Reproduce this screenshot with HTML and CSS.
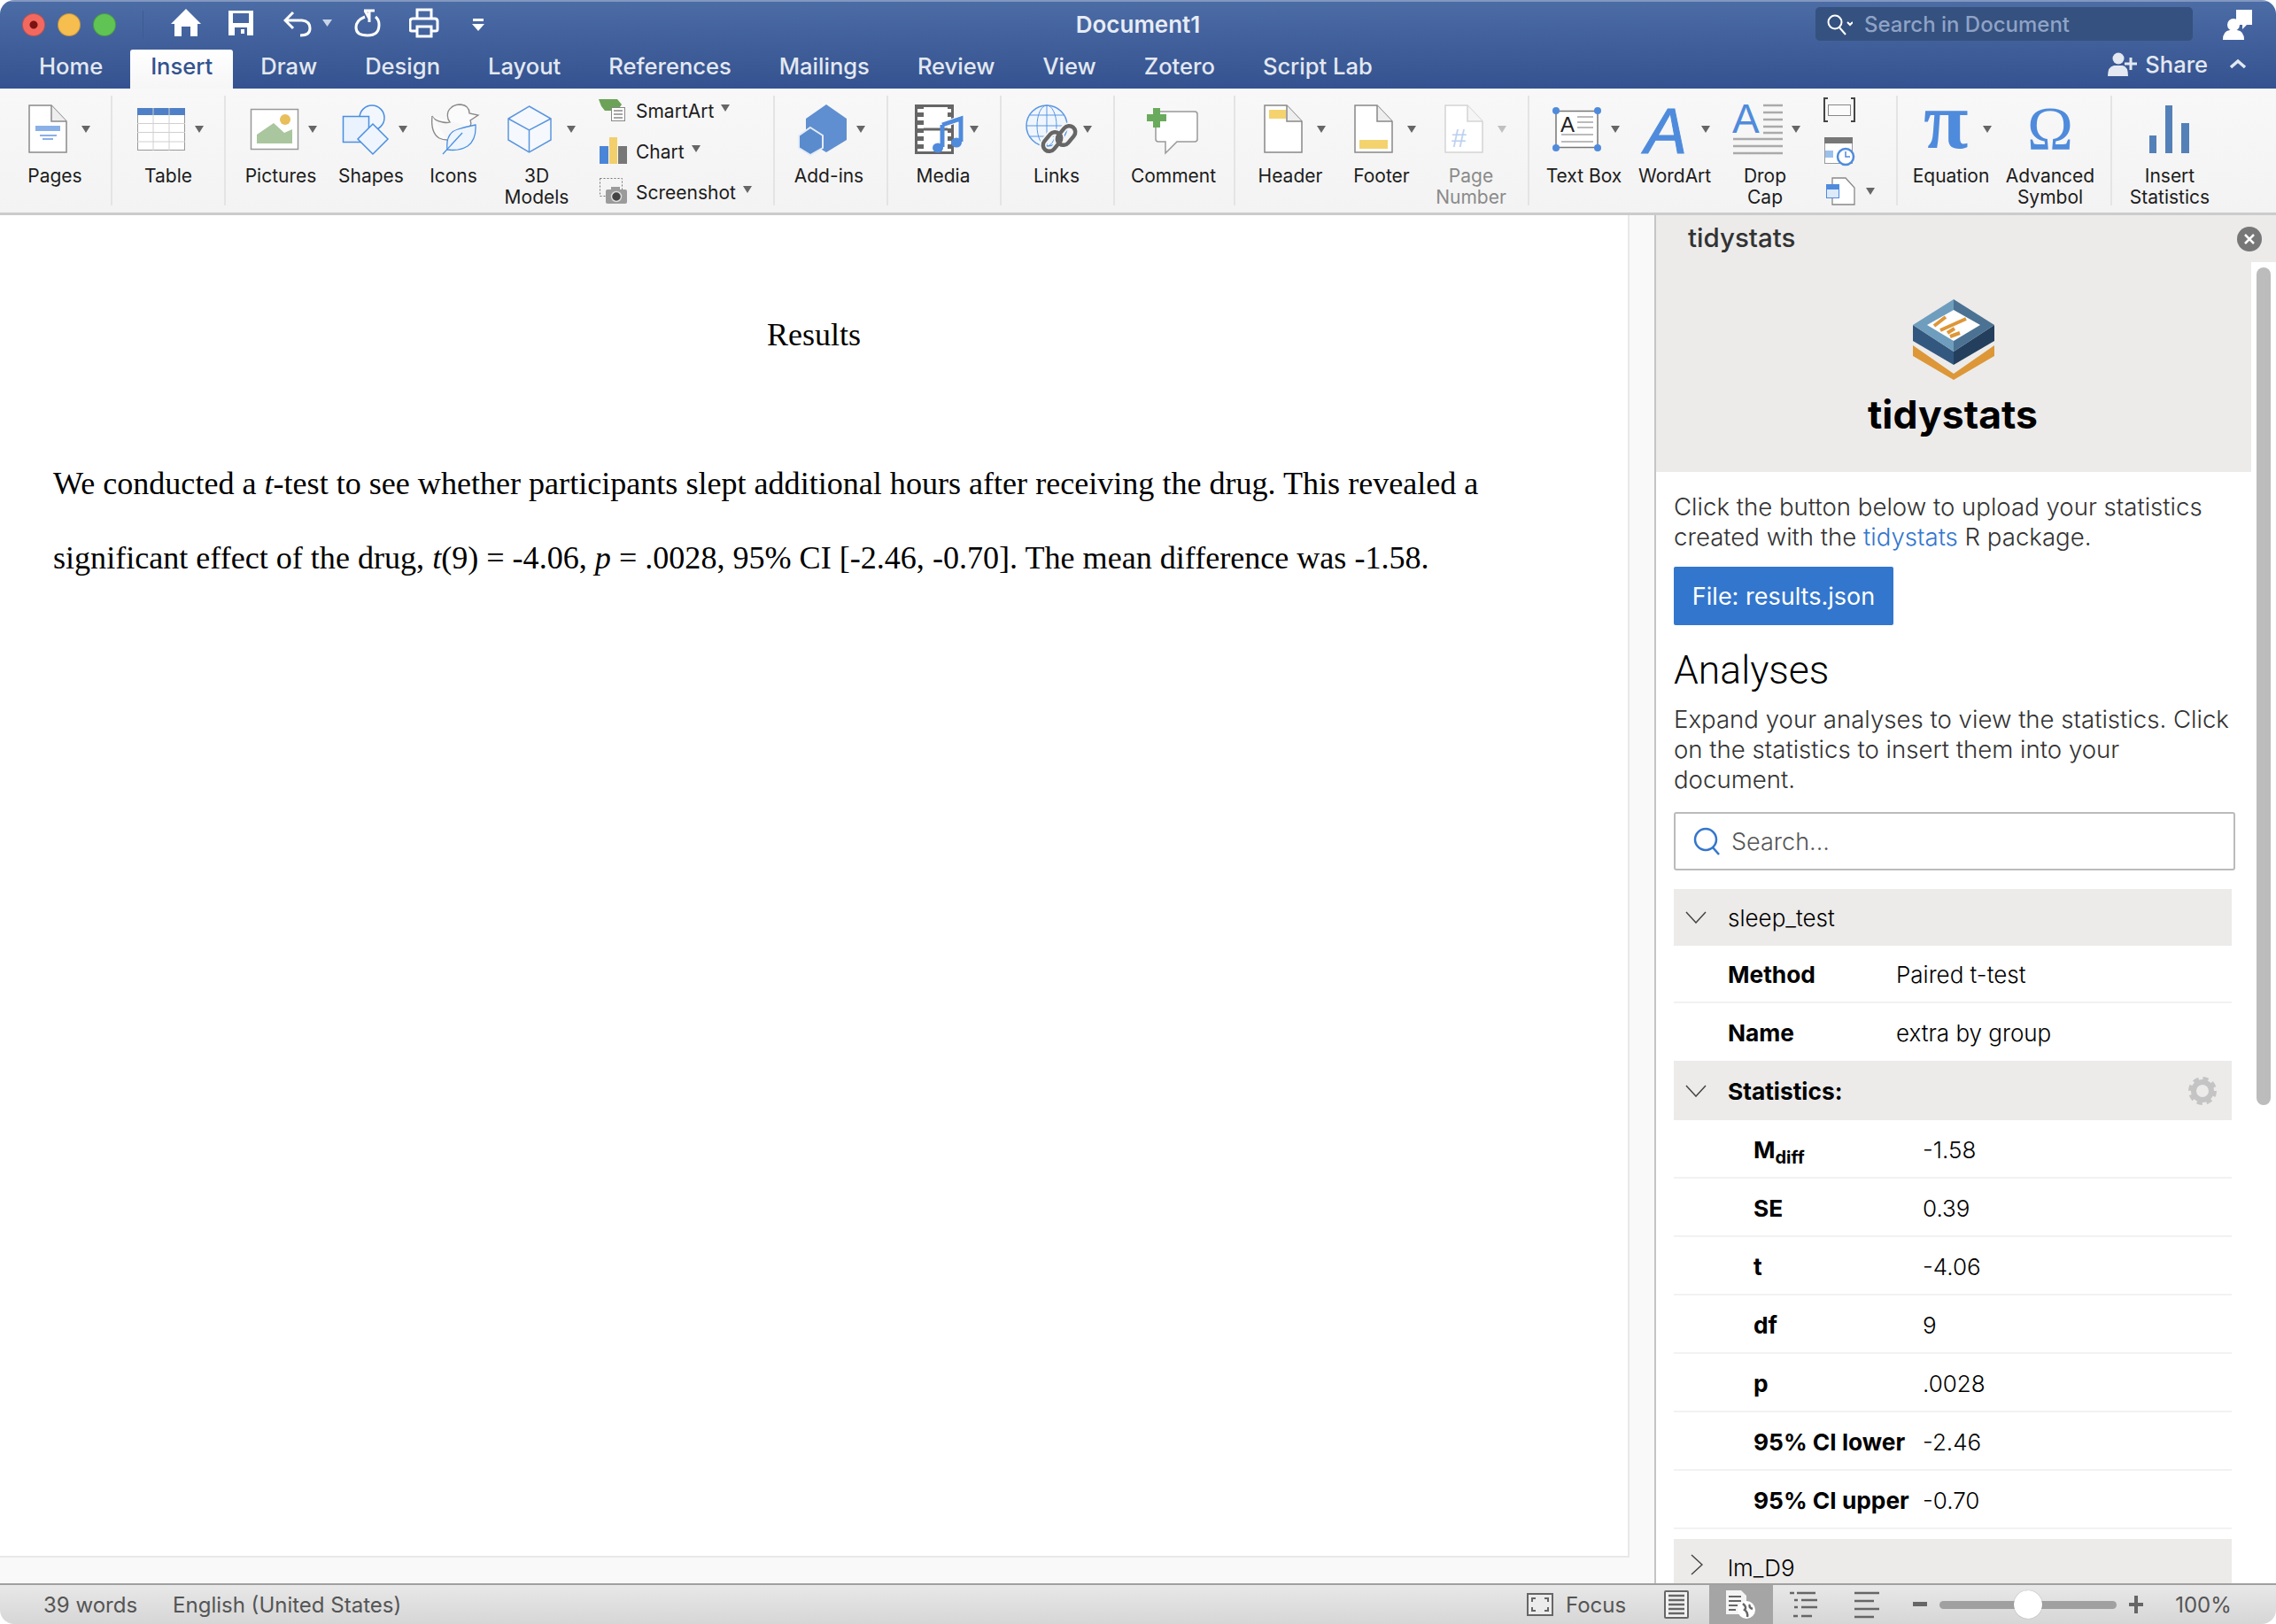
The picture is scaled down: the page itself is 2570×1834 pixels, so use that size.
FILE: index.html
```html
<!DOCTYPE html>
<html lang="en">
<head>
    <meta charset="UTF-8">
    <title>Document1</title>
    <link rel="stylesheet" href="styles.css">
</head>
<body>
<div class="window">

    <!-- Title bar and tabs -->
    <header class="titlebar">
        <div class="title-row">
            <div class="quick">
                <span class="light light-red"></span>
                <span class="light light-yellow"></span>
                <span class="light light-green"></span>
                <span class="quick-sep"></span>
                <svg width="65" height="56" viewBox="193 0 65 56"><path d="M210 10 L227 27 L223 27 L223 41 L215 41 L215 30 L205 30 L205 41 L197 41 L197 27 L193 27 Z" fill="#fff"/></svg>
                <svg width="62" height="56" viewBox="258 0 62 56"><path d="M258 12 H286 V40 H258 Z M263 15 V26 H281 V15 Z M265 31 V40 H279 V31 Z M272 33 H276 V38 H272 Z" fill="#fff" fill-rule="evenodd"/></svg>
                <svg width="80" height="56" viewBox="320 0 80 56"><path d="M331 14 L322 23 L331 32 M323 23 H341 Q350 24 350 32 Q350 40 339 40" fill="none" stroke="#fff" stroke-width="3"/><path d="M364 22 H375 L369.500 30 Z" fill="#c9d4e6"/></svg>
                <svg width="62" height="56" viewBox="400 0 62 56"><path d="M412 19 Q402 23 402 31 Q402 40 415 40 Q428 40 428 28 Q428 22 424 19 M412 12 L417 21 M417 12 V25 M411 12 H423" fill="none" stroke="#fff" stroke-width="3"/></svg>
                <svg width="70" height="56" viewBox="462 0 70 56"><path d="M471 21 V11 H487 V21 M471 35 H465 Q463 35 463 33 V24 Q463 21 466 21 H491 Q494 21 494 24 V33 Q494 35 492 35 H487 M471 30 H487 V41 H471 Z" fill="none" stroke="#fff" stroke-width="3"/></svg>
                <svg width="16" height="56" viewBox="532 0 16 56"><path d="M534 21 H546 V24 H534 Z M533 27 H547 L540 35 Z" fill="#fff"/></svg>
            </div>
            <div class="doc-title">Document1</div>
            <div class="title-right">
                <div class="doc-search">
                    <svg width="34" height="38" viewBox="0 0 34 38"><circle cx="14" cy="17" r="7.500" fill="none" stroke="#fff" stroke-width="2"/><path d="M19 23 L26 31 M28 17 L31 20 L34 17" fill="none" stroke="#fff" stroke-width="2"/></svg>
                    <span>Search in Document</span>
                </div>
                <svg class="person" width="36" height="38" viewBox="0 0 36 38"><path d="M16 3 H34 V20 H28 L23 25 V20 H16 Z" fill="#fff"/><circle cx="13" cy="20" r="7" fill="#fff"/><path d="M1 37 Q1 27 9 26 H17 Q25 27 25 37 Z" fill="#fff"/></svg>
            </div>
        </div>
        <div class="tab-row">
            <nav class="tabs">
                <span class="tab">Home</span>
                <span class="tab tab-active">Insert</span>
                <span class="tab">Draw</span>
                <span class="tab">Design</span>
                <span class="tab">Layout</span>
                <span class="tab">References</span>
                <span class="tab">Mailings</span>
                <span class="tab">Review</span>
                <span class="tab">View</span>
                <span class="tab">Zotero</span>
                <span class="tab">Script Lab</span>
            </nav>
            <div class="share">
                <svg width="36" height="30" viewBox="0 0 36 30"><circle cx="13" cy="9" r="6.500" fill="#e3e8f1"/><path d="M1 29 Q1 18 8 17 H18 Q24 18 24 29 Z" fill="#e3e8f1"/><path d="M27 8 V22 M20 15 H34" stroke="#e3e8f1" stroke-width="3"/></svg>
                <span>Share</span>
                <svg class="share-chev" width="20" height="12" viewBox="0 0 20 12"><path d="M2 10 L10 3 L18 10" fill="none" stroke="#e3e8f1" stroke-width="3.500"/></svg>
            </div>
        </div>
    </header>

    <!-- Ribbon -->
    <section class="ribbon">
        <div class="group g-pages">
            <div class="tool w-124">
                <svg width="124" height="78" viewBox="0 108 124 78">
                    <path d="M33 119 H58 L75 137 V172 H33 Z" fill="#fff" stroke="#8a8a8a" stroke-width="1.500"/><path d="M58 119 V137 H75" fill="#eee" stroke="#8a8a8a" stroke-width="1.500"/>
                    <path d="M40 142 H68 V148 H40 Z M45 152 H64 V154 H45 Z M48 156 H60 V158 H48 Z" fill="#8ab0e8"/>
                    <path d="M92 142 H102 L97 150 Z" fill="#666"/>
                </svg>
                <div class="label">Pages</div>
            </div>
        </div>
        <div class="group g-table">
            <div class="tool w-126">
                <svg width="126" height="78" viewBox="127 108 126 78">
                    <rect x="155.500" y="122.500" width="53" height="47" fill="#fff" stroke="#999"/>
                    <rect x="155" y="122" width="54" height="8" fill="#4f7fc6"/>
                    <path d="M173 122 V170 M191 122 V170 M155 139.500 H209 M155 149.500 H209 M155 160 H209" stroke="#d0d0d0" stroke-width="1" fill="none"/>
                    <path d="M220 142 H230 L225 150 Z" fill="#666"/>
                </svg>
                <div class="label">Table</div>
            </div>
        </div>
        <div class="group g-illus">
            <div class="tool w-124">
                <svg width="124" height="78" viewBox="255 108 124 78">
                    <rect x="283.500" y="123.500" width="53" height="45" fill="#fff" stroke="#999" stroke-width="1.500"/>
                    <path d="M290 162 V152 L309 139 L321 150 L330 146 V162 Z" fill="#aac69e"/>
                    <ellipse cx="322" cy="135" rx="6" ry="6" fill="#e8bf5a"/>
                    <path d="M348 142 H358 L353 150 Z" fill="#666"/>
                </svg>
                <div class="label">Pictures</div>
            </div>
            <div class="tool w-80">
                <svg width="80" height="78" viewBox="379 108 80 78">
                    <circle cx="420" cy="133" r="14" fill="#f2f7fe" stroke="#4a8fe0" stroke-width="1.500"/>
                    <rect x="387.500" y="131.500" width="29" height="29" fill="#e9f2fd" stroke="#4a8fe0" stroke-width="1.500"/>
                    <path d="M421 140 L438 157 L421 174 L404 157 Z" fill="#eff5fe" stroke="#4a8fe0" stroke-width="1.500"/>
                    <path d="M450 142 H460 L455 150 Z" fill="#666"/>
                </svg>
                <div class="label">Shapes</div>
            </div>
            <div class="tool w-106">
                <svg width="106" height="78" viewBox="459 108 106 78">
                    <path d="M488 131 Q490 136 500 138 Q505 139 508 138 Q504 133 506 126 Q510 118 520 118 Q530 119 530 128 L540 130 L531 136 Q533 141 530 143" fill="#fbfbfb" stroke="#888" stroke-width="1.300"/>
                    <path d="M488 131 Q486 150 496 156 Q500 158 505 158" fill="#fbfbfb" stroke="#888" stroke-width="1.300"/>
                    <path d="M505 169 Q503 150 517 146 Q527 143 537 141 Q538 158 528 165 Q518 171 505 169 Z" fill="#eef5fd" stroke="#4a8fe0" stroke-width="1.300"/>
                    <path d="M500 174 L522 150" fill="none" stroke="#4a8fe0" stroke-width="1.300"/>
                </svg>
                <div class="label">Icons</div>
            </div>
            <div class="tool w-82">
                <svg width="82" height="78" viewBox="565 108 82 78">
                    <path d="M597.500 120 L622 134 V158 L597.500 172 L574 158 V134 Z" fill="#f5f9fe" stroke="#5c96dd" stroke-width="1.500"/>
                    <path d="M574 134 L597.500 147 L622 134 M597.500 147 V172" fill="none" stroke="#5c96dd" stroke-width="1.500"/>
                    <path d="M640 142 H650 L645 150 Z" fill="#666"/>
                </svg>
                <div class="label">3D<br>Models</div>
            </div>
            <div class="mini-list">
                <div class="mini-row">
                    <svg width="32" height="30" viewBox="676 109 32 30">
                        <path d="M676 112 H697 L702 118 L697 125 H683 L679 120 Z" fill="#6ba257"/>
                        <rect x="690.500" y="121.500" width="15" height="15" fill="#fff" stroke="#888"/>
                        <path d="M693 125 H703 M693 129 H703 M693 133 H703" stroke="#888" stroke-width="1.500"/>
                    </svg>
                    <span>SmartArt</span><i class="caret"></i>
                </div>
                <div class="mini-row">
                    <svg width="32" height="30" viewBox="676 155 32 30">
                        <rect x="677" y="165" width="10" height="20" fill="#4a85d8"/>
                        <rect x="688" y="155" width="9" height="30" fill="#f2cf6a"/>
                        <rect x="698" y="165" width="10" height="20" fill="#777"/>
                    </svg>
                    <span>Chart</span><i class="caret"></i>
                </div>
                <div class="mini-row">
                    <svg width="32" height="30" viewBox="676 203 32 30">
                        <rect x="677.500" y="203.500" width="25" height="20" fill="none" stroke="#777" stroke-dasharray="2 2"/>
                        <rect x="684" y="216" width="24" height="16" rx="2" fill="#9b9b9b"/><rect x="690" y="213" width="10" height="4" fill="#9b9b9b"/>
                        <circle cx="696" cy="224" r="5.500" fill="#444" stroke="#ddd" stroke-width="1.500"/>
                    </svg>
                    <span>Screenshot</span><i class="caret"></i>
                </div>
            </div>
        </div>
        <div class="group g-addins">
            <div class="tool w-122">
                <svg width="122" height="78" viewBox="875 108 122 78">
                    <path d="M933 118 L956 134 V158 L933 172 L910 158 V134 Z" fill="#5f8fd0"/>
                    <path d="M915 144 L929 153 V167 L915 175 L902 167 V153 Z" fill="#5a8bcd" stroke="#e4ecf7" stroke-width="2"/>
                    <path d="M967 142 H977 L972 150 Z" fill="#666"/>
                </svg>
                <div class="label">Add-ins</div>
            </div>
        </div>
        <div class="group g-media">
            <div class="tool w-124">
                <svg width="124" height="78" viewBox="1003 108 124 78">
                    <rect x="1034.500" y="119.500" width="41" height="53" fill="#fff" stroke="#666" stroke-width="3"/>
                    <path d="M1039 118 V174" stroke="#666" stroke-width="8" stroke-dasharray="5 4"/>
                    <path d="M1073 118 V174" stroke="#666" stroke-width="6" stroke-dasharray="5 4"/>
                    <path d="M1043 146 H1070" stroke="#666" stroke-width="3"/>
                    <path d="M1064 141 L1085 134 V160" fill="none" stroke="#fff" stroke-width="7"/>
                    <path d="M1064 141 L1085 134 V160" fill="none" stroke="#4f8bdc" stroke-width="5"/><path d="M1064 141 V166" stroke="#4f8bdc" stroke-width="5"/>
                    <ellipse cx="1059" cy="167" rx="6" ry="5.500" fill="#4f8bdc"/><ellipse cx="1080" cy="161" rx="6" ry="5.500" fill="#4f8bdc"/>
                    <path d="M1095 142 H1105 L1100 150 Z" fill="#666"/>
                </svg>
                <div class="label">Media</div>
            </div>
        </div>
        <div class="group g-links">
            <div class="tool w-124">
                <svg width="124" height="78" viewBox="1131 108 124 78">
                    <circle cx="1182" cy="142" r="23" fill="#f0f6fe" stroke="#5b97e2" stroke-width="1.500"/>
                    <ellipse cx="1182" cy="142" rx="11" ry="23" fill="none" stroke="#5b97e2"/>
                    <path d="M1182 119 V165 M1159 142 H1205 M1163 130 H1201 M1163 154 H1201" fill="none" stroke="#5b97e2"/>
                    <rect x="1176" y="153" width="24" height="14" rx="7" transform="rotate(-50 1188 160)" fill="none" stroke="#f5f5f5" stroke-width="8"/>
                    <rect x="1192" y="146" width="24" height="14" rx="7" transform="rotate(-50 1204 153)" fill="none" stroke="#f5f5f5" stroke-width="8"/>
                    <rect x="1176" y="153" width="24" height="14" rx="7" transform="rotate(-50 1188 160)" fill="none" stroke="#666" stroke-width="4.500"/>
                    <rect x="1192" y="146" width="24" height="14" rx="7" transform="rotate(-50 1204 153)" fill="none" stroke="#666" stroke-width="4.500"/>
                    <path d="M1223 142 H1233 L1228 150 Z" fill="#666"/>
                </svg>
                <div class="label">Links</div>
            </div>
        </div>
        <div class="group g-comment">
            <div class="tool w-132">
                <svg width="132" height="78" viewBox="1259 108 132 78">
                    <path d="M1305 126 H1349 Q1352 126 1352 129 V157 Q1352 160 1349 160 H1329 L1316 173 V160 H1308 Q1305 160 1305 157 Z" fill="#fff" stroke="#999" stroke-width="1.500"/>
                    <path d="M1302 122 H1310 V129 H1317 V137 H1310 V144 H1302 V137 H1295 V129 H1302 Z" fill="#6aaa5c"/>
                </svg>
                <div class="label">Comment</div>
            </div>
        </div>
        <div class="group g-header">
            <div class="tool w-124">
                <svg width="124" height="78" viewBox="1395 108 124 78">
                    <path d="M1428 119 H1453 L1470 137 V172 H1428 Z" fill="#fff" stroke="#888" stroke-width="1.500"/><path d="M1453 119 V137 H1470" fill="#eee" stroke="#888" stroke-width="1.500"/>
                    <rect x="1433" y="124" width="19" height="10" fill="#f4d36e"/>
                    <path d="M1487 142 H1497 L1492 150 Z" fill="#666"/>
                </svg>
                <div class="label">Header</div>
            </div>
            <div class="tool w-82">
                <svg width="82" height="78" viewBox="1519 108 82 78">
                    <path d="M1530 119 H1555 L1572 137 V172 H1530 Z" fill="#fff" stroke="#888" stroke-width="1.500"/><path d="M1555 119 V137 H1572" fill="#eee" stroke="#888" stroke-width="1.500"/>
                    <rect x="1535" y="158" width="32" height="10" fill="#f4d36e"/>
                    <path d="M1589 142 H1599 L1594 150 Z" fill="#666"/>
                </svg>
                <div class="label">Footer</div>
            </div>
            <div class="tool w-120">
                <svg width="120" height="78" viewBox="1601 108 120 78">
                    <path d="M1632 119 H1657 L1674 137 V172 H1632 Z" fill="#fff" stroke="#d4d4d4" stroke-width="1.500"/><path d="M1657 119 V137 H1674" fill="#f5f5f5" stroke="#d4d4d4" stroke-width="1.500"/>
                    <text x="1639" y="166" class="svg-hash">#</text>
                    <path d="M1691 142 H1701 L1696 150 Z" fill="#c0c0c0"/>
                </svg>
                <div class="label label-off">Page<br>Number</div>
            </div>
        </div>
        <div class="group g-text">
            <div class="tool w-123">
                <svg width="123" height="78" viewBox="1727 108 123 78">
                    <rect x="1757" y="125.500" width="47" height="41" fill="#fff" stroke="#777" stroke-width="1.500"/>
                    <circle cx="1757" cy="125" r="4" fill="#4f8bdc"/><circle cx="1804" cy="125" r="4" fill="#4f8bdc"/><circle cx="1757" cy="167" r="4" fill="#4f8bdc"/><circle cx="1804" cy="167" r="4" fill="#4f8bdc"/>
                    <text x="1762" y="149" class="svg-a">A</text>
                    <path d="M1781 132 H1799 M1781 138 H1799 M1781 144 H1799 M1763 152 H1799 M1763 160 H1799" stroke="#bbb" stroke-width="2"/>
                    <path d="M1819 142 H1829 L1824 150 Z" fill="#666"/>
                </svg>
                <div class="label">Text Box</div>
            </div>
            <div class="tool w-82">
                <svg width="82" height="78" viewBox="1850 108 82 78">
                    <text x="1857" y="173" class="svg-wordart">A</text>
                    <path d="M1921 142 H1931 L1926 150 Z" fill="#666"/>
                </svg>
                <div class="label">WordArt</div>
            </div>
            <div class="tool w-122">
                <svg width="122" height="78" viewBox="1932 108 122 78">
                    <text x="1956" y="150" class="svg-drop">A</text>
                    <path d="M1991 119 H2013 M1991 127 H2013 M1991 135 H2013 M1991 143 H2013 M1991 150 H2013 M1957 157 H2013 M1957 165 H2013 M1957 173 H2013" stroke="#aaa" stroke-width="2.500"/>
                    <path d="M2023 142 H2033 L2028 150 Z" fill="#666"/>
                </svg>
                <div class="label">Drop<br>Cap</div>
            </div>
            <div class="mini-col">
                <svg width="60" height="30" viewBox="2054 109 60 30">
                    <path d="M2064 111 H2060 V137 H2064 M2090 111 H2094 V137 H2090" fill="none" stroke="#444" stroke-width="2"/>
                    <rect x="2064.500" y="118.500" width="25" height="12" fill="#fbfbfb" stroke="#888"/>
                </svg>
                <svg width="60" height="34" viewBox="2054 155 60 34">
                    <rect x="2060.500" y="155.500" width="31" height="29" fill="#fff" stroke="#999"/>
                    <rect x="2060" y="155" width="32" height="7" fill="#777"/>
                    <rect x="2061" y="170" width="9" height="8" fill="#9cc0ec"/>
                    <circle cx="2084" cy="177" r="9" fill="#fff" stroke="#4f8bdc" stroke-width="2.500"/>
                    <path d="M2084 171 V177 H2089" fill="none" stroke="#4f8bdc" stroke-width="1.500"/>
                </svg>
                <svg width="64" height="32" viewBox="2054 201 64 32">
                    <path d="M2069 201 H2084 L2094 212 V231 H2069 Z" fill="#fff" stroke="#888" stroke-width="1.300"/>
                    <rect x="2062" y="208" width="15" height="5" fill="#4f8bdc"/>
                    <rect x="2062.500" y="213.500" width="14" height="10" fill="#ddeafa" stroke="#4f8bdc"/>
                    <path d="M2107 212 H2117 L2112 220 Z" fill="#666"/>
                </svg>
            </div>
        </div>
        <div class="group g-symbols">
            <div class="tool w-120">
                <svg width="120" height="78" viewBox="2143 108 120 78">
                    <text x="2172" y="167" class="svg-math">π</text>
                    <path d="M2239 142 H2249 L2244 150 Z" fill="#666"/>
                </svg>
                <div class="label">Equation</div>
            </div>
            <div class="tool w-104">
                <svg width="104" height="78" viewBox="2263 108 104 78">
                    <text x="2289" y="169" class="svg-omega">Ω</text>
                </svg>
                <div class="label">Advanced<br>Symbol</div>
            </div>
        </div>
        <div class="group g-stats">
            <div class="tool w-130">
                <svg width="130" height="78" viewBox="2385 108 130 78">
                    <path d="M2427 153 H2435 V173 H2427 Z M2445 119 H2453 V173 H2445 Z M2463 139 H2472 V173 H2463 Z" fill="#5480b8"/>
                </svg>
                <div class="label">Insert<br>Statistics</div>
            </div>
        </div>
    </section>

    <!-- Document and task pane -->
    <main class="workspace">
        <div class="doc-area">
            <article class="page">
                <h1 class="doc-heading">Results</h1>
                <p class="doc-text">We conducted a <em>t</em>-test to see whether participants slept additional hours after receiving the drug. This revealed a<br>significant effect of the drug, <em>t</em>(9) = -4.06, <em>p</em> = .0028, 95% CI [-2.46, -0.70]. The mean difference was -1.58.</p>
            </article>
        </div>

        <aside class="pane">
            <div class="pane-head">
                <span>tidystats</span>
                <svg width="28" height="28" viewBox="0 0 28 28"><circle cx="14" cy="14" r="14" fill="#777"/><path d="M9 9 L19 19 M19 9 L9 19" stroke="#fff" stroke-width="2.500"/></svg>
            </div>
            <div class="pane-main">
                <div class="pane-scroll">
                    <div class="banner">
                        <svg width="92" height="92" viewBox="2159 338 92 92">
                            <path d="M2159 390 L2205 422 L2251 390 V402 L2205 429 L2159 402 Z" fill="#dd9738"/>
                            <path d="M2159 367 L2205 397 V412 L2159 385 Z" fill="#33587f"/>
                            <path d="M2251 367 L2205 397 V412 L2251 385 Z" fill="#243f5e"/>
                            <path d="M2205 338 L2159 367 L2205 397 Z" fill="#6f9dbd"/>
                            <path d="M2205 338 L2251 367 L2205 397 Z" fill="#4b7292"/>
                            <path d="M2205 350 L2235 367 L2205 385 L2175 367 Z" fill="#fff"/>
                            <path d="M2183 368 L2196 358 M2190 373 L2219 360 M2198 376 L2206 371 M2201 380 L2212 376" stroke="#dd9738" stroke-width="4" fill="none"/>
                        </svg>
                        <div class="banner-name">tidystats</div>
                    </div>
                    <div class="pane-content">
                        <p class="intro">Click the button below to upload your statistics<br>created with the <a class="link">tidystats</a> R package.</p>
                        <button class="file-btn">File: results.json</button>
                        <h2 class="analyses">Analyses</h2>
                        <p class="intro">Expand your analyses to view the statistics. Click<br>on the statistics to insert them into your<br>document.</p>
                        <div class="search">
                            <svg width="32" height="34" viewBox="0 0 32 34"><circle cx="14" cy="15" r="12" fill="none" stroke="#3376cd" stroke-width="2.500"/><path d="M22 24 L29 32" stroke="#3376cd" stroke-width="2.500"/></svg>
                            <span>Search...</span>
                        </div>
                        <div class="acc-row">
                            <svg class="chev" width="24" height="14" viewBox="0 0 24 14"><path d="M1 1 L12 13 L23 1" fill="none" stroke="#444" stroke-width="1.500"/></svg>
                            <span>sleep_test</span>
                        </div>
                        <div class="info-row"><b>Method</b><span>Paired t-test</span></div>
                        <div class="info-row info-last"><b>Name</b><span>extra by group</span></div>
                        <div class="acc-row acc-stats">
                            <svg class="chev" width="24" height="14" viewBox="0 0 24 14"><path d="M1 1 L12 13 L23 1" fill="none" stroke="#444" stroke-width="1.500"/></svg>
                            <b>Statistics:</b>
                            <svg class="gear" width="32" height="32" viewBox="0 0 32 32"><circle cx="16" cy="16" r="10" fill="none" stroke="#c4c4c4" stroke-width="6"/><circle cx="16" cy="16" r="13.500" fill="none" stroke="#c4c4c4" stroke-width="5" stroke-dasharray="6 4.600"/></svg>
                        </div>
                        <div class="stat-row"><b>M<sub>diff</sub></b><span>-1.58</span></div>
                        <div class="stat-row"><b>SE</b><span>0.39</span></div>
                        <div class="stat-row"><b>t</b><span>-4.06</span></div>
                        <div class="stat-row"><b>df</b><span>9</span></div>
                        <div class="stat-row"><b>p</b><span>.0028</span></div>
                        <div class="stat-row"><b>95% CI lower</b><span>-2.46</span></div>
                        <div class="stat-row"><b>95% CI upper</b><span>-0.70</span></div>
                        <div class="acc-row acc-last">
                            <svg class="chev" width="14" height="24" viewBox="0 0 14 24"><path d="M1 1 L13 12 L1 23" fill="none" stroke="#444" stroke-width="1.500"/></svg>
                            <span class="chev-text">lm_D9</span>
                        </div>
                    </div>
                </div>
                <div class="scrollbar"><div class="thumb"></div></div>
            </div>
        </aside>
    </main>

    <!-- Status bar -->
    <footer class="statusbar">
        <span class="status-words">39 words</span>
        <span class="status-lang">English (United States)</span>
        <div class="status-right">
            <svg width="30" height="26" viewBox="0 0 30 26"><rect x="1" y="1" width="28" height="24" fill="#ececec" stroke="#666" stroke-width="2"/><path d="M6 10 V6 H10 M20 6 H24 V10 M6 16 V20 H10 M20 20 H24 V16" fill="none" stroke="#666" stroke-width="2"/></svg>
            <span class="status-focus">Focus</span>
            <svg class="view-print" width="28" height="32" viewBox="0 0 28 32"><rect x="1" y="1" width="26" height="30" rx="1" fill="#f2f2f2" stroke="#666" stroke-width="2"/><path d="M5 6 H23 M5 11 H23 M5 16 H23 M5 21 H23 M5 26 H23" stroke="#666" stroke-width="2.500"/></svg>
            <span class="view-web">
                <svg width="36" height="34" viewBox="0 0 36 34"><path d="M1 1 H18 L24 7 V28 H1 Z" fill="#f4f4f4"/><path d="M4 8 H18 M4 13 H18 M4 18 H14 M4 23 H12" stroke="#666" stroke-width="2"/><circle cx="24" cy="23" r="10" fill="#fff"/><path d="M20 16 Q25 20 22 23 Q26 26 25 31 M28 17 Q26 20 31 22" fill="none" stroke="#666" stroke-width="2.500"/></svg>
            </span>
            <svg class="view-outline" width="32" height="32" viewBox="0 0 32 32"><path d="M1 3 H6 M9 3 H30 M6 11 H10 M14 11 H32 M6 19 H10 M14 19 H32 M5 29 H10 M14 29 H26" stroke="#666" stroke-width="2.500"/></svg>
            <svg class="view-draft" width="28" height="32" viewBox="0 0 28 32"><path d="M0 3 H28 M0 12 H22 M0 21 H28 M0 30 H22" stroke="#666" stroke-width="2.500"/></svg>
            <svg class="zoom-minus" width="16" height="6" viewBox="0 0 16 6"><rect width="16" height="5" fill="#666"/></svg>
            <div class="slider"><span class="knob"></span></div>
            <svg class="zoom-plus" width="16" height="24" viewBox="0 0 16 24"><path d="M8 2 V22 M0 12 H16" stroke="#666" stroke-width="4"/></svg>
            <span class="status-zoom">100%</span>
        </div>
    </footer>
</div>
</body>
</html>
```

FILE: styles.css
```css
* {
    margin: 0;
    padding: 0;
    box-sizing: border-box;
}

html, body {
    height: 100%;
    overflow: hidden;
    background: #fff;
}

body {
    font-family: Inter, "Liberation Sans", sans-serif;
}

.window {
    width: 2570px;
    height: 1834px;
    display: flex;
    flex-direction: column;
    overflow: hidden;
    border-radius: 16px;
}

/* Title bar */
.titlebar {
    height: 100px;
    flex-shrink: 0;
    background: linear-gradient(#4c6ca6, #34528f);
    border-top: 2px solid #8298bf;
    color: #e3e8f1;
}

.title-row {
    height: 54px;
    display: grid;
    grid-template-columns: 1fr auto 1fr;
    align-items: center;
}

.quick {
    display: flex;
    align-items: center;
    padding-left: 25px;
    margin-top: -2px;
}

.quick svg {
    flex-shrink: 0;
}

.light {
    width: 26px;
    height: 26px;
    border-radius: 50%;
    margin-right: 14px;
    border: 1px solid rgba(0, 0, 0, 0.2);
}

.light-red {
    background: radial-gradient(circle, #7a1410 0 4px, #f4695f 5px);
}

.light-yellow {
    background: #f6bd4f;
}

.light-green {
    background: #5fc454;
}

.quick-sep {
    width: 1px;
    height: 32px;
    background: #3d5a92;
    margin: 0 31px 0 16px;
}

.doc-title {
    font-size: 26px;
    font-weight: 600;
    color: #e7ecf4;
    margin-top: -4px;
}

.title-right {
    display: flex;
    justify-content: flex-end;
    align-items: center;
    margin-top: -4px;
}

.doc-search {
    width: 426px;
    height: 38px;
    background: #35517f;
    border-radius: 5px;
    display: flex;
    align-items: center;
    color: #8fa3c6;
    font-size: 24px;
    font-weight: 500;
    margin-right: 33px;
    padding-left: 8px;
}

.doc-search span {
    margin-left: 13px;
}

.person {
    margin-right: 25px;
}

.tab-row {
    height: 44px;
    display: flex;
    justify-content: space-between;
}

.tabs {
    display: flex;
    padding-left: 17px;
}

.tab {
    padding: 0 23px;
    margin: 0 4px;
    font-size: 25.550px;
    font-weight: 500;
    line-height: 38px;
    white-space: nowrap;
}

.tab-active {
    background: linear-gradient(#fff, #f6f6f6);
    color: #34528f;
    border-radius: 3px 3px 0 0;
}

.share {
    display: flex;
    align-items: center;
    height: 30px;
    margin-top: 1px;
    font-size: 25.500px;
    font-weight: 500;
}

.share svg:first-child {
    margin-right: 1px;
}

.share span {
    margin-left: 6px;
}

.share-chev {
    margin: 0 33px 0 24px;
}

/* Ribbon */
.ribbon {
    height: 143px;
    flex-shrink: 0;
    display: flex;
    background: linear-gradient(#f8f8f8, #f3f3f3);
    border-bottom: 3px solid #cbcbcb;
}

.group {
    display: flex;
    height: 124px;
    margin-top: 8px;
    border-right: 2px solid #e4e4e4;
}

.g-pages { width: 127px; }
.g-table { width: 128px; }
.g-illus { width: 620px; }
.g-addins { width: 128px; }
.g-media { width: 128px; }
.g-links { width: 128px; }
.g-comment { width: 136px; }
.g-header { width: 332px; }
.g-text { width: 416px; }
.g-symbols { width: 242px; }
.g-stats { width: 185px; border-right: 0; }

.tool {
    flex-shrink: 0;
}

.tool svg, .mini-col svg {
    display: block;
    overflow: visible;
}

.w-80 { width: 80px; }
.w-82 { width: 82px; }
.w-104 { width: 104px; }
.w-106 { width: 106px; }
.w-120 { width: 120px; }
.w-122 { width: 122px; }
.w-123 { width: 123px; }
.w-124 { width: 124px; }
.w-126 { width: 126px; }
.w-130 { width: 130px; }
.w-132 { width: 132px; }

.label {
    font-size: 21px;
    line-height: 24px;
    margin-top: 1px;
    text-align: center;
    color: #1c1c1c;
    white-space: nowrap;
}

.label-off {
    color: #8a8a8a;
}

.mini-list {
    padding: 1px 0 0 29px;
    display: flex;
    flex-direction: column;
    gap: 16px;
}

.mini-row {
    height: 30px;
    display: flex;
    align-items: center;
    font-size: 21px;
    color: #1c1c1c;
    white-space: nowrap;
}

.mini-row span {
    padding-top: 2px;
}

.mini-row svg {
    overflow: visible;
    margin-right: 10px;
}

.caret {
    display: inline-block;
    width: 0;
    height: 0;
    margin: -4px 0 0 8px;
    border-left: 5px solid transparent;
    border-right: 5px solid transparent;
    border-top: 8px solid #666;
}

.mini-col {
    padding-top: 1px;
    display: flex;
    flex-direction: column;
}

.mini-col svg:nth-child(2) {
    margin-top: 16px;
}

.mini-col svg:nth-child(3) {
    margin-top: 12px;
}

.svg-hash {
    font-family: "Liberation Sans", sans-serif;
    font-size: 30px;
    fill: #bcd0f0;
}

.svg-a {
    font-family: "Liberation Sans", sans-serif;
    font-size: 24px;
    fill: #222;
}

.svg-wordart {
    font-family: "Liberation Sans", sans-serif;
    font-style: italic;
    font-size: 72px;
    fill: #4f8bdc;
    stroke: #4f8bdc;
    stroke-width: 1px;
}

.svg-drop {
    font-family: "Liberation Sans", sans-serif;
    font-size: 46px;
    fill: #4f8bdc;
}

.svg-math {
    font-family: "Liberation Serif", serif;
    font-weight: bold;
    font-size: 92px;
    fill: #4f8bdc;
}

.svg-omega {
    font-family: "Liberation Serif", serif;
    font-size: 70px;
    fill: #4f8bdc;
}

/* Document */
.workspace {
    flex: 1;
    display: flex;
    min-height: 0;
}

.doc-area {
    width: 1868px;
    flex-shrink: 0;
    background: #f9f9f9;
}

.page {
    width: 1840px;
    height: 1516px;
    background: #fff;
    border-right: 2px solid #e8e8e8;
    border-bottom: 2px solid #e8e8e8;
    font-family: "Liberation Serif", serif;
    color: #000;
    padding: 0 0 0 60px;
}

.doc-heading {
    font-size: 36px;
    font-weight: normal;
    text-align: center;
    margin-left: -60px;
    line-height: 84px;
    padding-top: 93px;
}

.doc-text {
    font-size: 36.100px;
    line-height: 84px;
    margin-top: 84px;
    white-space: nowrap;
}

/* Task pane */
.pane {
    flex: 1;
    min-width: 0;
    border-left: 2px solid #c5c5c5;
    display: flex;
    flex-direction: column;
    background: #fff;
    color: #000;
}

.pane-head {
    height: 53px;
    flex-shrink: 0;
    background: #ecebea;
    display: flex;
    align-items: center;
    justify-content: space-between;
    padding: 0 16px 0 36px;
    font-size: 29.500px;
    font-weight: 500;
    color: #333;
}

.pane-head span {
    margin-top: -3px;
}

.pane-main {
    flex: 1;
    min-height: 0;
    display: flex;
}

.pane-scroll {
    width: 672px;
    flex-shrink: 0;
    overflow: hidden;
}

.banner {
    height: 237px;
    background: #ecebea;
    text-align: center;
    padding-top: 42px;
}

.banner svg {
    display: block;
    margin: 0 auto;
}

.banner-name {
    font-size: 44.500px;
    font-weight: 700;
    line-height: 58px;
    margin-top: 9px;
    margin-left: -2px;
}

.pane-content {
    padding: 22px 22px 0 20px;
}

.intro {
    font-size: 27.600px;
    font-weight: 300;
    line-height: 34px;
    color: #333;
    white-space: nowrap;
}

.link {
    color: #3376cd;
}

.file-btn {
    display: block;
    width: 248px;
    height: 66px;
    margin-top: 17px;
    background: #3376cd;
    color: #fff;
    border: 0;
    border-radius: 2px;
    font-family: Inter, sans-serif;
    font-size: 27px;
}

.analyses {
    font-family: Roboto, sans-serif;
    font-size: 44.500px;
    font-weight: 300;
    line-height: 89px;
    padding-top: 7px;
    height: 89px;
}

.search {
    width: 634px;
    height: 66px;
    margin: 20px 0 21px;
    border: 2px solid #bbb;
    border-radius: 3px;
    display: flex;
    align-items: center;
    padding-left: 20px;
    font-size: 27px;
    font-weight: 300;
    color: #555;
}

.search span {
    margin-left: 11px;
}

.acc-row {
    height: 64px;
    background: #ecebea;
    display: flex;
    align-items: center;
    padding-left: 13px;
    font-size: 26px;
    font-weight: 300;
}

.acc-row .chev {
    margin-right: 24px;
}

.acc-stats {
    height: 67px;
}

.acc-stats b, .info-row b, .stat-row b {
    font-size: 26.300px;
    font-weight: 700;
    padding-top: 2px;
}

.info-row span, .stat-row span {
    padding-top: 2px;
}

.gear {
    margin-left: auto;
    margin-right: 17px;
}

.acc-last {
    height: 64px;
    margin-top: 11px;
    align-items: flex-start;
    padding: 17px 0 0 19px;
}

.acc-last .chev {
    margin-right: 28px;
}

.info-row, .stat-row {
    height: 65px;
    display: flex;
    align-items: center;
    font-size: 26px;
    font-weight: 300;
    border-bottom: 2px solid #f2f2f2;
    white-space: nowrap;
}

.info-row {
    padding-left: 61px;
}

.info-row b {
    width: 190px;
}

.info-last {
    border-bottom: 0;
}

.stat-row {
    height: 66px;
    padding-left: 90px;
}

.stat-row b {
    width: 191px;
}

.stat-row sub {
    font-size: 20px;
    vertical-align: -6px;
    line-height: 0;
}

.scrollbar {
    flex: 1;
    padding: 6px 0 0 6px;
}

.thumb {
    width: 16px;
    height: 946px;
    border-radius: 8px;
    background: #bcbcbc;
}

/* Status bar */
.statusbar {
    height: 46px;
    flex-shrink: 0;
    display: flex;
    align-items: center;
    background: linear-gradient(#e8e8e8, #d6d6d6);
    border-top: 2px solid #a0a0a0;
    font-size: 24px;
    color: #555;
    padding-left: 49px;
    position: relative;
}

.status-lang {
    margin-left: 40px;
}

.status-right {
    position: absolute;
    left: 1724px;
    top: 0;
    height: 44px;
    display: flex;
    align-items: center;
}

.status-focus {
    margin-left: 14px;
}

.view-print {
    margin-left: 43px;
}

.view-web {
    width: 72px;
    height: 44px;
    margin-left: 23px;
    background: #a5a5a5;
    display: flex;
    align-items: center;
    justify-content: center;
}

.view-outline {
    margin-left: 18px;
}

.view-draft {
    margin-left: 42px;
}

.zoom-minus {
    margin-left: 38px;
}

.slider {
    width: 200px;
    height: 9px;
    margin-left: 14px;
    border-radius: 5px;
    background: #a0a0a0;
    position: relative;
}

.knob {
    position: absolute;
    left: 84px;
    top: -12px;
    width: 32px;
    height: 32px;
    border-radius: 50%;
    background: #fff;
    box-shadow: 0 0 1px rgba(0, 0, 0, 0.4);
}

.zoom-plus {
    margin-left: 14px;
}

.status-zoom {
    margin-left: 36px;
}
```
